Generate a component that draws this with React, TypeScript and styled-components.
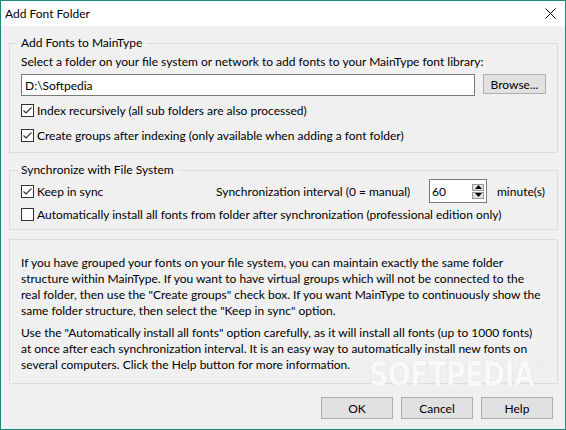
import React from "react";
import styled, { createGlobalStyle } from "styled-components";

const GlobalStyle = createGlobalStyle`
  html, body {
    margin: 0;
    padding: 0;
    background: #ffffff;
  }
  body {
    font-family: "Segoe UI", Lato, "Noto Sans", sans-serif;
    font-size: 12px;
    color: #000;
  }
  * {
    box-sizing: border-box;
  }
`;

const Window = styled.div`
  position: relative;
  width: 566px;
  height: 430px;
  border: 1px solid #1b887a;
  display: flex;
  flex-direction: column;
  overflow: hidden;
`;

const TitleBar = styled.div`
  height: 25px;
  background: #fff;
  display: flex;
  align-items: center;
  justify-content: space-between;
  padding-left: 4px;
  line-height: 16px;
`;

const CloseButton = styled.div`
  width: 30px;
  height: 25px;
  display: flex;
  align-items: center;
  justify-content: center;
`;

const Body = styled.div`
  flex: 1;
  background: #f0f0f0;
  padding: 9px 7px 0 8px;
  display: flex;
  flex-direction: column;
`;

const Group = styled.fieldset<{ $pad: string; $gapTop?: number }>`
  margin: ${(p) => p.$gapTop ?? 0}px 0 0 0;
  border: 1px solid #dcdcdc;
  padding: ${(p) => p.$pad};
  min-width: 0;
`;

const Legend = styled.legend`
  padding: 0 4px;
  margin-left: -4px;
  line-height: 16px;
`;

const Line = styled.div`
  line-height: 16px;
  white-space: nowrap;
`;

const PathRow = styled.div`
  display: flex;
  align-items: flex-start;
  gap: 8px;
  margin-top: 4px;
`;

const PathInput = styled.input`
  width: 454px;
  height: 22px;
  border: 1px solid #7a7a7a;
  background: #fff;
  padding: 0 3px;
  font: inherit;
  color: #000;
  outline: none;
`;

const Button = styled.button<{ $w: number; $h: number }>`
  width: ${(p) => p.$w}px;
  height: ${(p) => p.$h}px;
  background: #e1e1e1;
  border: 1px solid #adadad;
  font: inherit;
  color: #000;
  padding: 0;
  display: flex;
  align-items: center;
  justify-content: center;
`;

const CheckRow = styled.label<{ $top?: number }>`
  display: flex;
  align-items: center;
  gap: 3px;
  height: 16px;
  margin-top: ${(p) => p.$top ?? 0}px;
  white-space: nowrap;
`;

const Box = styled.span`
  width: 13px;
  height: 13px;
  border: 1px solid #333;
  background: #fff;
  display: flex;
  align-items: center;
  justify-content: center;
  flex: none;
`;

const SyncRow = styled.div`
  display: grid;
  grid-template-columns: 195px 213px 58px auto;
  align-items: center;
  height: 24px;
`;

const Spinner = styled.div`
  width: 58px;
  height: 24px;
  border: 1px solid #7a7a7a;
  background: #fff;
  display: flex;
  align-items: center;
  justify-content: space-between;
  padding: 0 2px 0 2px;
`;

const SpinButtons = styled.div`
  display: flex;
  flex-direction: column;
  gap: 1px;
`;

const SpinButton = styled.div`
  width: 12px;
  height: 7px;
  background: #e1e1e1;
  border: 1px solid #9a9a9a;
  display: flex;
  align-items: center;
  justify-content: center;
`;

const Unit = styled.span`
  margin-left: 10px;
`;

const InfoPanel = styled.div`
  margin-top: 9px;
  border: 1px solid #dcdcdc;
  padding: 15px 11px 10px 11px;
`;

const Paragraph = styled.div<{ $top?: number }>`
  margin-top: ${(p) => p.$top ?? 0}px;
`;

const Footer = styled.div`
  margin-top: 13px;
  display: flex;
  justify-content: flex-end;
  gap: 8px;
  padding-right: 5px;
`;

const Watermark = styled.div`
  position: absolute;
  left: 368px;
  top: 358px;
  font-family: "DejaVu Sans", sans-serif;
  font-weight: bold;
  font-size: 34px;
  line-height: 30px;
  height: 30px;
  letter-spacing: -1px;
  color: rgba(255, 255, 255, 0.92);
  text-shadow: 0 0 1px rgba(0, 0, 0, 0.18);
  transform: scaleX(0.8);
  transform-origin: left top;
  white-space: nowrap;
  pointer-events: none;

  sup {
    font-size: 12px;
    font-weight: normal;
    vertical-align: top;
    line-height: 12px;
    margin-left: 2px;
  }
`;

const Check = ({ on }: { on: boolean }) => (
  <Box>
    {on && (
      <svg width="11" height="11" viewBox="0 0 11 11">
        <path d="M1.5 5.5 L4 8 L9.5 2.5" fill="none" stroke="#333" strokeWidth="1.2" />
      </svg>
    )}
  </Box>
);

const Arrow = ({ up }: { up: boolean }) => (
  <svg width="7" height="4" viewBox="0 0 7 4">
    <path d={up ? "M0 4 L3.5 0 L7 4 Z" : "M0 0 L3.5 4 L7 0 Z"} fill="#000" />
  </svg>
);

const para1 = [
  "If you have grouped your fonts on your file system, you can maintain exactly the same folder",
  "structure within MainType. If you want to have virtual groups which will not be connected to the",
  'real folder, then use the "Create groups" check box. If you want MainType to continuously show the',
  'same folder structure, then select the "Keep in sync" option.',
];

const para2 = [
  'Use the "Automatically install all fonts" option carefully, as it will install all fonts (up to 1000 fonts)',
  "at once after each synchronization interval. It is an easy way to automatically install new fonts on",
  "several computers. Click the Help button for more information.",
];

const App = () => {
  return (
    <>
      <GlobalStyle />
      <Window>
        <TitleBar>
          <span>Add Font Folder</span>
          <CloseButton>
            <svg width="11" height="11" viewBox="0 0 11 11">
              <path d="M0.5 0.5 L10.5 10.5 M10.5 0.5 L0.5 10.5" stroke="#000" strokeWidth="1" />
            </svg>
          </CloseButton>
        </TitleBar>
        <Body>
          <Group $pad="3px 11px 9px 11px">
            <Legend>Add Fonts to MainType</Legend>
            <Line>Select a folder on your file system or network to add fonts to your MainType font library:</Line>
            <PathRow>
              <PathInput defaultValue="D:\Softpedia" readOnly />
              <Button $w={63} $h={20}>Browse...</Button>
            </PathRow>
            <CheckRow $top={6}>
              <Check on />
              Index recursively (all sub folders are also processed)
            </CheckRow>
            <CheckRow $top={9}>
              <Check on />
              Create groups after indexing (only available when adding a font folder)
            </CheckRow>
          </Group>

          <Group $pad="1px 11px 7px 11px" $gapTop={9}>
            <Legend>Synchronize with File System</Legend>
            <SyncRow>
              <CheckRow>
                <Check on />
                Keep in sync
              </CheckRow>
              <span>Synchronization interval (0 = manual)</span>
              <Spinner>
                <span>60</span>
                <SpinButtons>
                  <SpinButton>
                    <Arrow up />
                  </SpinButton>
                  <SpinButton>
                    <Arrow up={false} />
                  </SpinButton>
                </SpinButtons>
              </Spinner>
              <Unit>minute(s)</Unit>
            </SyncRow>
            <CheckRow $top={3}>
              <Check on={false} />
              Automatically install all fonts from folder after synchronization (professional edition only)
            </CheckRow>
          </Group>

          <InfoPanel>
            <Paragraph>
              {para1.map((t) => (
                <Line key={t}>{t}</Line>
              ))}
            </Paragraph>
            <Paragraph $top={6}>
              {para2.map((t) => (
                <Line key={t}>{t}</Line>
              ))}
            </Paragraph>
          </InfoPanel>

          <Footer>
            <Button $w={72} $h={22}>OK</Button>
            <Button $w={72} $h={22}>Cancel</Button>
            <Button $w={72} $h={22}>Help</Button>
          </Footer>
        </Body>
        <Watermark>
          SOFTPEDIA<sup>®</sup>
        </Watermark>
      </Window>
    </>
  );
};

export default App;
